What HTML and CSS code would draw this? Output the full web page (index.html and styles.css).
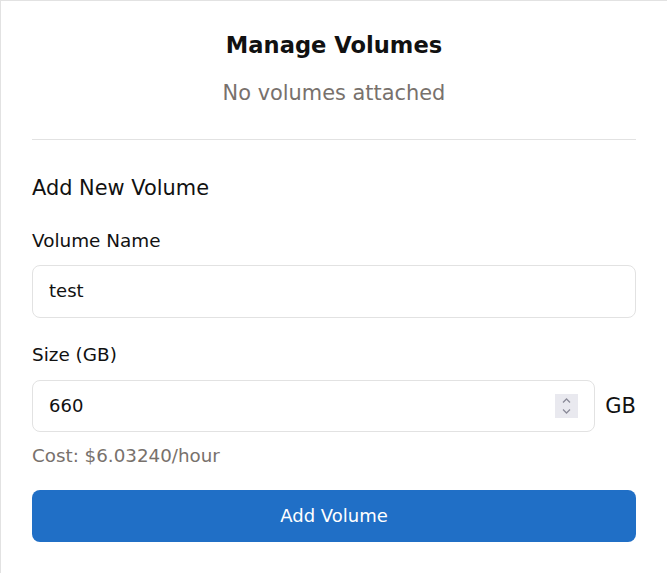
FILE: index.html
```html
<!DOCTYPE html>
<html>
<head>
<meta charset="utf-8">
<link rel="stylesheet" href="styles.css">
</head>
<body>
<div class="panel">
  <h2 class="title">Manage Volumes</h2>
  <p class="empty">No volumes attached</p>
  <hr class="divider">
  <h3 class="subtitle">Add New Volume</h3>
  <label class="label" for="vname">Volume Name</label>
  <input class="field" id="vname" type="text" value="test">
  <label class="label label-size" for="vsize">Size (GB)</label>
  <div class="size-row">
    <div class="num-wrap">
      <input class="field field-num" id="vsize" type="number" value="660">
      <span class="spinner">
        <svg width="23" height="24" viewBox="0 0 23 24">
          <path d="M8 8.5 L11.5 5 L15 8.5" fill="none" stroke="#8b8b99" stroke-width="1.3"/>
          <path d="M8 15.5 L11.5 19 L15 15.5" fill="none" stroke="#8b8b99" stroke-width="1.3"/>
        </svg>
      </span>
    </div>
    <span class="unit">GB</span>
  </div>
  <p class="cost">Cost: $6.03240/hour</p>
  <button class="btn">Add Volume</button>
</div>
</body>
</html>
```
FILE: styles.css
```css
html, body {
  margin: 0;
  padding: 0;
  overflow: hidden;
  background: #fff;
  font-family: "DejaVu Sans", sans-serif;
}
.panel {
  width: 604px;
  padding: 31px;
  border: 1px solid #e2e2e2;
  border-right: none;
  border-bottom: none;
  color: #111;
}
.title {
  margin: 0;
  text-align: center;
  font-size: 22.6px;
  font-weight: bold;
  line-height: 26px;
}
.empty {
  margin: 22px 0 0;
  text-align: center;
  font-size: 20.9px;
  line-height: 26px;
  color: #78716c;
}
.divider {
  margin: 33px 0 0;
  border: none;
  border-top: 1px solid #e2e2e2;
}
.subtitle {
  margin: 35px 0 0;
  font-size: 20.9px;
  font-weight: normal;
  line-height: 26px;
}
.label {
  display: block;
  margin-top: 29px;
  font-size: 18.4px;
  line-height: 22px;
}
.field {
  display: block;
  box-sizing: border-box;
  width: 100%;
  height: 53px;
  margin-top: 13px;
  padding: 0 16px 2px;
  border: 1px solid #e2e2e2;
  border-radius: 8px;
  font-family: "DejaVu Sans", sans-serif;
  font-size: 18px;
  color: #111;
  background: #fff;
  outline: none;
}
.label-size {
  margin-top: 26px;
}
.size-row {
  display: flex;
  align-items: center;
  gap: 10px;
  margin-top: 14px;
}
.num-wrap {
  position: relative;
  flex: 1;
}
.num-wrap .field {
  margin-top: 0;
  height: 52px;
  -moz-appearance: textfield;
}
.field-num::-webkit-inner-spin-button,
.field-num::-webkit-outer-spin-button {
  -webkit-appearance: none;
  margin: 0;
}
.spinner {
  position: absolute;
  right: 17px;
  top: 14px;
  width: 23px;
  height: 24px;
  background: #e9e9ef;
  display: block;
}
.spinner svg {
  display: block;
}
.unit {
  font-size: 21px;
}
.cost {
  margin: 13px 0 0;
  font-size: 18.3px;
  line-height: 22px;
  color: #78716c;
}
.btn {
  display: block;
  width: 100%;
  height: 52px;
  margin-top: 23px;
  padding: 0 0 2px;
  border: none;
  border-radius: 8px;
  background: #206fc6;
  color: #fff;
  font-family: "DejaVu Sans", sans-serif;
  font-size: 18px;
}
```
